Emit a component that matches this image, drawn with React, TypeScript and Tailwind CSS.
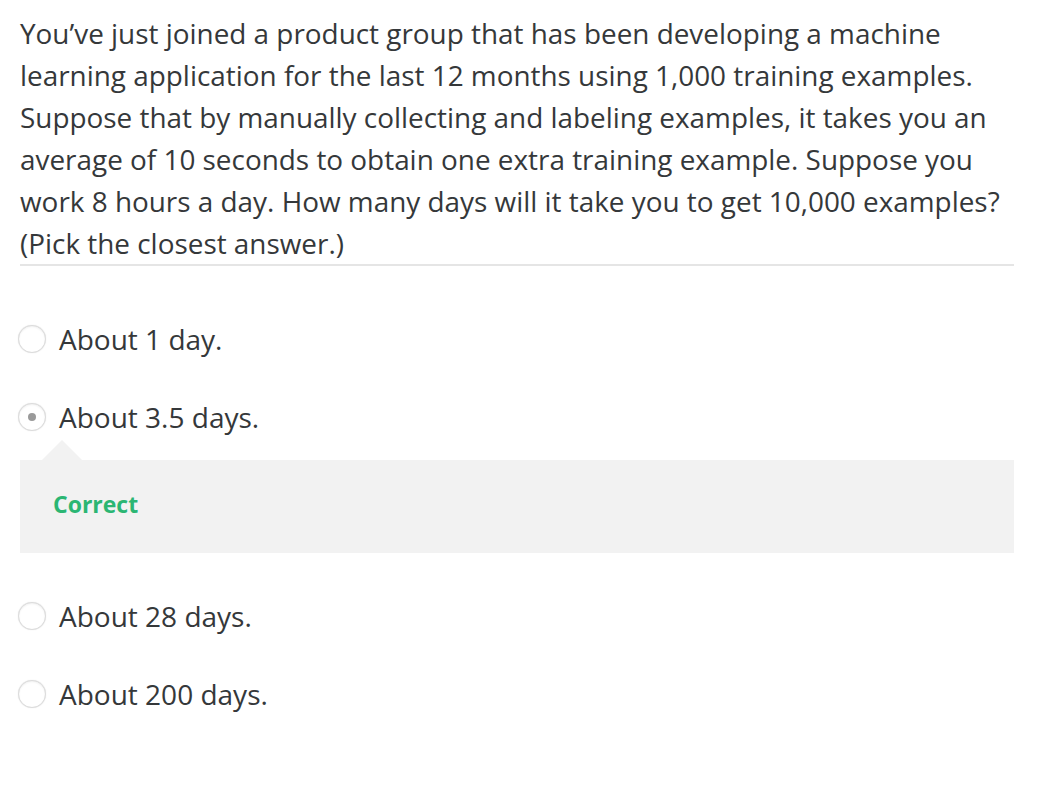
const options = [
  { label: "About 1 day.", checked: false },
  { label: "About 3.5 days.", checked: true, feedback: "Correct" },
  { label: "About 28 days.", checked: false },
  { label: "About 200 days.", checked: false },
];

function Radio({ checked }: { checked: boolean }) {
  return (
    <span className="-ml-[2px] flex h-[28px] w-[28px] shrink-0 items-center justify-center rounded-full border border-[#dcdcdc] bg-white shadow-[0_0_1px_rgba(0,0,0,0.15),inset_0_1px_2px_rgba(0,0,0,0.06)]">
      {checked && <span className="h-[8px] w-[8px] rounded-full bg-[#9a9a9a]" />}
    </span>
  );
}

export default function App() {
  return (
    <div className="min-h-screen bg-white px-5 pt-[12px] font-['Open_Sans',sans-serif] text-[#35383a]">
      <div className="w-[994px]">
        <p className="border-b-2 border-[#e5e5e5] text-[27.9px] leading-[42px]">
          You’ve just joined a product group that has been developing a machine learning application for
          the last 12 months using 1,000 training examples. Suppose that by manually collecting and
          labeling examples, it takes you an average of 10 seconds to obtain one extra training example.
          Suppose you work 8 hours a day. How many days will it take you to get 10,000 examples? (Pick
          the closest answer.)
        </p>

        <div className="mt-[52px] flex flex-col">
          {options.map((o) => (
            <div key={o.label} className="mb-[36px]">
              <label className="flex h-[42px] items-center gap-[13px] text-[28px]">
                <Radio checked={o.checked} />
                <span>{o.label}</span>
              </label>
              {o.feedback && (
                <div className="relative mt-[22px] mb-[6px] h-[93px] bg-[#f2f2f2] pl-[33px] pt-[28px]">
                  <span className="absolute -top-[20px] left-[22px] h-0 w-0 border-x-[20px] border-b-[20px] border-x-transparent border-b-[#f2f2f2]" />
                  <span className="text-[23px] font-bold leading-[33px] text-[#2bb673]">{o.feedback}</span>
                </div>
              )}
            </div>
          ))}
        </div>
      </div>
    </div>
  );
}
